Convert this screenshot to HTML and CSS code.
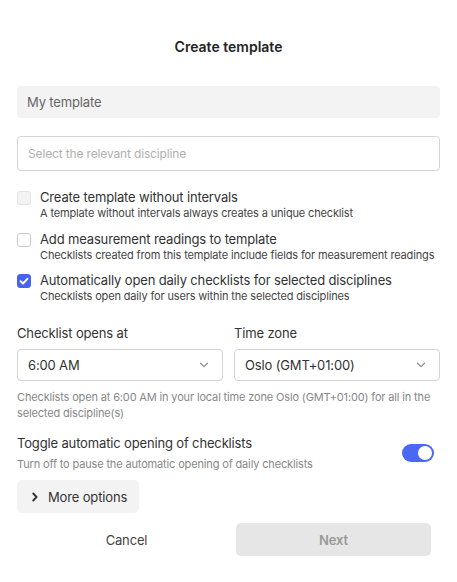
FILE: index.html
```html
<!DOCTYPE html>
<html lang="en">
<head>
<meta charset="utf-8">
<title>Create template</title>
<link rel="stylesheet" href="styles.css">
</head>
<body>
<div class="dialog">
  <h1 class="title">Create template</h1>

  <div class="input input-filled">My template</div>
  <div class="input input-outline placeholder">Select the relevant discipline</div>

  <div class="options">
    <div class="option">
      <span class="checkbox disabled"></span>
      <div class="option-text">
        <div class="option-label">Create template without intervals</div>
        <div class="option-sub">A template without intervals always creates a unique checklist</div>
      </div>
    </div>
    <div class="option">
      <span class="checkbox"></span>
      <div class="option-text">
        <div class="option-label">Add measurement readings to template</div>
        <div class="option-sub">Checklists created from this template include fields for measurement readings</div>
      </div>
    </div>
    <div class="option">
      <span class="checkbox checked">
        <svg viewBox="0 0 14 14" width="14" height="14"><path d="M3.6 7.2 L6 9.5 L10.4 4.8" fill="none" stroke="#fff" stroke-width="1.9" stroke-linecap="round" stroke-linejoin="round"/></svg>
      </span>
      <div class="option-text">
        <div class="option-label">Automatically open daily checklists for selected disciplines</div>
        <div class="option-sub">Checklists open daily for users within the selected disciplines</div>
      </div>
    </div>
  </div>

  <div class="selects">
    <div class="field">
      <div class="field-label">Checklist opens at</div>
      <div class="select">
        <span>6:00 AM</span>
        <svg class="chev" viewBox="0 0 10 6" width="10" height="6"><path d="M1.5 1.2 L5 4.6 L8.5 1.2" fill="none" stroke="#8a8a8a" stroke-width="1.2" stroke-linecap="round" stroke-linejoin="round"/></svg>
      </div>
    </div>
    <div class="field">
      <div class="field-label">Time zone</div>
      <div class="select">
        <span>Oslo (GMT+01:00)</span>
        <svg class="chev" viewBox="0 0 10 6" width="10" height="6"><path d="M1.5 1.2 L5 4.6 L8.5 1.2" fill="none" stroke="#8a8a8a" stroke-width="1.2" stroke-linecap="round" stroke-linejoin="round"/></svg>
      </div>
    </div>
  </div>
  <p class="help">Checklists open at 6:00 AM in your local time zone Oslo (GMT+01:00) for all in the selected discipline(s)</p>

  <div class="toggle-row">
    <div class="toggle-text">
      <div class="toggle-label">Toggle automatic opening of checklists</div>
      <div class="toggle-sub">Turn off to pause the automatic opening of daily checklists</div>
    </div>
    <span class="switch"><span class="knob"></span></span>
  </div>

  <button class="more">
    <svg viewBox="0 0 8 10" width="8" height="10"><path d="M2.2 1.5 L5.6 5 L2.2 8.5" fill="none" stroke="#333" stroke-width="1.8" stroke-linecap="round" stroke-linejoin="round"/></svg>
    <span>More options</span>
  </button>

  <div class="footer">
    <button class="cancel">Cancel</button>
    <button class="next">Next</button>
  </div>
</div>
</body>
</html>
```

FILE: styles.css
```css
* { box-sizing: border-box; }
html, body { margin: 0; padding: 0; background: #fff; }
body {
  font-family: Inter, "Noto Sans", "Liberation Sans", sans-serif;
  color: #333;
  width: 457px;
  height: 582px;
  overflow: hidden;
  letter-spacing: -0.15px;
}
.dialog { padding: 37px 17px 0 17px; }
.title {
  margin: 0;
  font-size: 14px;
  line-height: 20px;
  font-weight: 600;
  text-align: center;
  color: #242424;
  letter-spacing: 0;
}
.input {
  display: flex;
  align-items: center;
  padding: 0 10px;
  border-radius: 4px;
}
.input-filled {
  margin-top: 29px;
  height: 32px;
  background: #f3f3f3;
  font-size: 13px;
  color: #666;
}
.input-outline {
  margin-top: 18px;
  height: 35px;
  border: 1px solid #d4d4d4;
  font-size: 12px;
  color: #b0b0b0;
}
.options {
  margin-top: 18px;
  display: flex;
  flex-direction: column;
  gap: 9.5px;
}
.option { display: flex; align-items: flex-start; gap: 9px; }
.checkbox {
  flex: none;
  width: 14px;
  height: 14px;
  margin-top: 2px;
  border: 1px solid #c9c9d1;
  border-radius: 3px;
  background: #fff;
  display: flex;
}
.checkbox.disabled { background: #f3f3f3; border-color: #e4e4e4; }
.checkbox.checked { background: #4763ee; border-color: #4763ee; }
.checkbox svg { margin: -1px; }
.option-label { font-size: 13px; line-height: 17px; color: #333; }
.option-sub { font-size: 11px; line-height: 15px; color: #444; white-space: nowrap; }
.selects {
  margin-top: 20px;
  display: grid;
  grid-template-columns: 1fr 1fr;
  gap: 11px;
}
.field-label { font-size: 13px; line-height: 18px; color: #333; }
.select {
  margin-top: 7px;
  height: 32px;
  border: 1px solid #d4d4d4;
  border-radius: 4px;
  padding: 0 13px 0 10px;
  display: flex;
  align-items: center;
  justify-content: space-between;
  font-size: 13px;
  color: #333;
}
.help {
  margin: 8px 0 0 0;
  font-size: 11px;
  line-height: 16px;
  color: #888;
}
.toggle-row {
  margin-top: 13px;
  display: flex;
  align-items: center;
  justify-content: space-between;
  padding-right: 6px;
}
.toggle-label { font-size: 13px; line-height: 18px; color: #333; }
.toggle-sub { margin-top: 4px; font-size: 11px; line-height: 16px; color: #888; }
.switch {
  width: 32px;
  height: 18px;
  border-radius: 9px;
  background: #4a68f3;
  display: flex;
  align-items: center;
  justify-content: flex-end;
  padding: 0 2px;
}
.knob { width: 14px; height: 14px; border-radius: 50%; background: #fff; }
button { font-family: inherit; border: none; cursor: pointer; letter-spacing: inherit; }
.more {
  margin-top: 8px;
  height: 33px;
  width: 122px;
  background: #f3f3f3;
  border-radius: 5px;
  display: flex;
  align-items: center;
  gap: 9px;
  padding: 0 0 0 14px;
  font-size: 13px;
  color: #333;
}
.footer {
  margin-top: 10px;
  display: flex;
  padding-right: 9px;
}
.cancel {
  width: 219px;
  height: 33px;
  background: transparent;
  font-size: 13px;
  font-weight: 400;
  color: #444;
}
.next {
  flex: 1;
  height: 33px;
  background: #e6e6e6;
  border-radius: 5px;
  font-size: 13px;
  font-weight: 600;
  color: #999;
}
```
